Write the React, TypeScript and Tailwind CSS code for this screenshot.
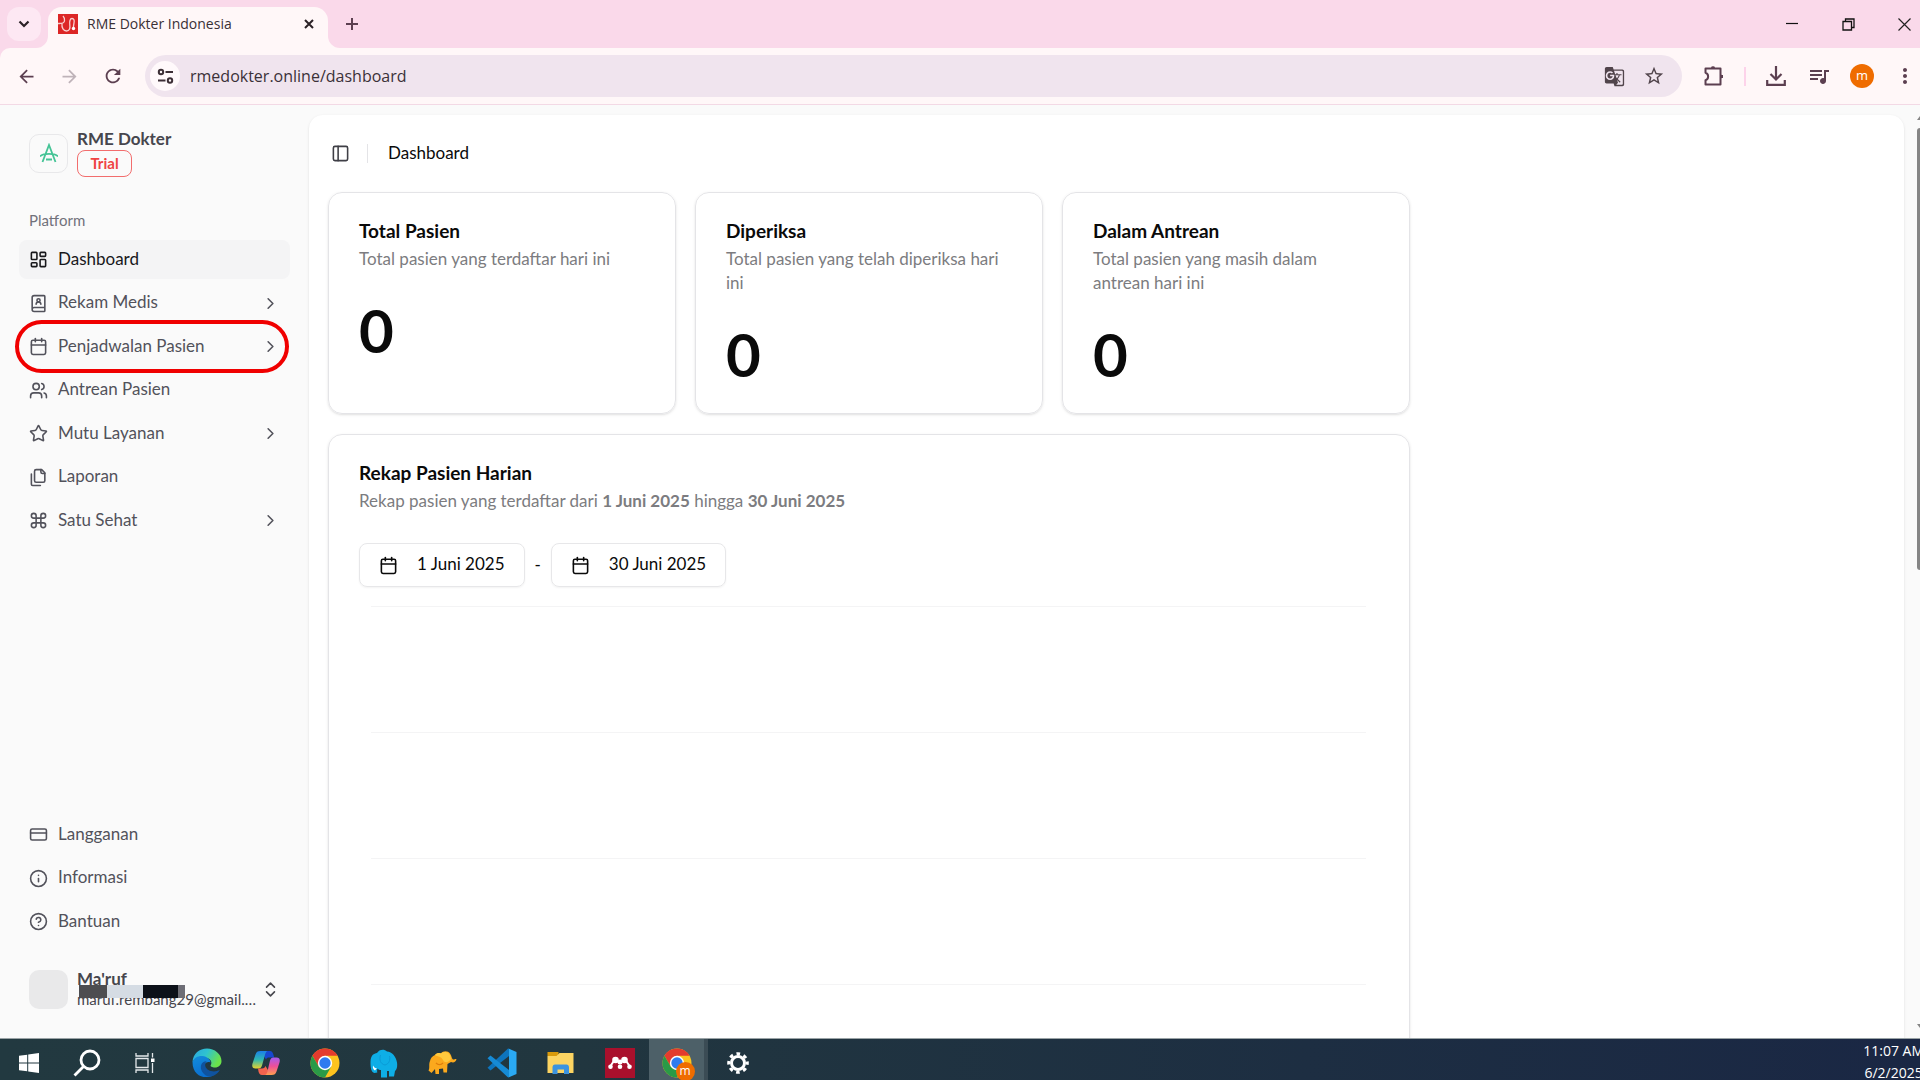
import React from "react";
import {
  BookUser,
  Calendar,
  ChevronRight,
  ChevronsUpDown,
  CircleQuestionMark,
  Command,
  CreditCard,
  Info,
  LayoutDashboard,
  PanelLeft,
  Star,
  Users,
} from "lucide-react";
import {
  MdArrowBack,
  MdArrowForward,
  MdGTranslate,
  MdMoreVert,
  MdQueueMusic,
  MdRefresh,
  MdStarBorder,
} from "react-icons/md";

type IconType = React.ComponentType<{ size?: number }>;
type NavEntry = { label: string; icon: IconType; active?: boolean; expandable?: boolean; marked?: boolean };

function FilesIcon({ size = 24 }: { size?: number }) {
  return (
    <svg width={size} height={size} viewBox="0 0 24 24" fill="none" stroke="currentColor" strokeWidth="2" strokeLinecap="round" strokeLinejoin="round">
      <path d="M20 7h-3a2 2 0 0 1-2-2V2" />
      <path d="M9 18a2 2 0 0 1-2-2V4a2 2 0 0 1 2-2h7l4 4v10a2 2 0 0 1-2 2Z" />
      <path d="M3 7.600v12.800A1.600 1.600 0 0 0 4.600 22h9.800" />
    </svg>
  );
}

const platformNav: NavEntry[] = [
  { label: "Dashboard", icon: LayoutDashboard, active: true },
  { label: "Rekam Medis", icon: BookUser, expandable: true },
  { label: "Penjadwalan Pasien", icon: Calendar, expandable: true, marked: true },
  { label: "Antrean Pasien", icon: Users },
  { label: "Mutu Layanan", icon: Star, expandable: true },
  { label: "Laporan", icon: FilesIcon },
  { label: "Satu Sehat", icon: Command, expandable: true },
];

const supportNav: NavEntry[] = [
  { label: "Langganan", icon: CreditCard },
  { label: "Informasi", icon: Info },
  { label: "Bantuan", icon: CircleQuestionMark },
];

const stats = [
  { title: "Total Pasien", text: "Total pasien yang terdaftar hari ini", value: 0 },
  { title: "Diperiksa", text: "Total pasien yang telah diperiksa hari ini", value: 0 },
  { title: "Dalam Antrean", text: "Total pasien yang masih dalam antrean hari ini", value: 0 },
];

function TabStrip() {
  return (
    <div className="flex h-12 items-end overflow-hidden bg-[#fad9ea]">
      <div className="flex h-12 w-12 items-center pl-[7px]">
        <button aria-label="Cari tab" className="grid size-[34px] place-items-center rounded-xl bg-[#fde8f3]">
          <svg width="12" height="8" viewBox="0 0 12 8" fill="none" stroke="#2b2126" strokeWidth="2.2">
            <path d="M1.5 1.5 6 6l4.5-4.5" />
          </svg>
        </button>
      </div>
      <div className="relative flex h-[41px] w-[280px] items-center rounded-t-[14px] bg-[#fff7f8] px-[10px] pb-[7px]">
        <svg className="absolute bottom-0 -left-3" width="12" height="12" viewBox="0 0 12 12">
          <path d="M12 0v12H0A12 12 0 0 0 12 0Z" fill="#fff7f8" />
        </svg>
        <svg className="absolute -right-3 bottom-0" width="12" height="12" viewBox="0 0 12 12">
          <path d="M0 0v12h12A12 12 0 0 1 0 0Z" fill="#fff7f8" />
        </svg>
        <svg width="20" height="20" viewBox="0 0 20 20" fill="none">
          <path d="M0 0h20v20H0z" fill="#dc2626" />
          <path
            d="M0 9.500c3 0 6 .5 6.500-2.500.3-2-.5-4-1.500-5M4 9.500C3.500 14 5.500 17 8.500 17s3.800-2.500 3.300-6C11.300 7.500 12 4.500 14 4.500s2.500 2 2 4.500-.7 3.500-.5 5"
            stroke="#f9cfcf"
            strokeWidth="1.300"
          />
          <circle cx="15.500" cy="14.500" r="1.700" fill="#fff" />
        </svg>
        <span className="ml-[9px] flex-1 text-sm text-[#3a3035]">RME Dokter Indonesia</span>
        <button aria-label="Tutup tab" className="grid size-[18px] place-items-center">
          <svg width="10" height="10" viewBox="0 0 10 10" stroke="#2b2126" strokeWidth="2">
            <path d="m1 1 8 8M9 1 1 9" />
          </svg>
        </button>
      </div>
      <button aria-label="Tab baru" className="grid size-12 place-items-center">
        <svg width="14" height="14" viewBox="0 0 14 14" stroke="#5c3f50" strokeWidth="2">
          <path d="M7 1v12M1 7h12" />
        </svg>
      </button>
      <div className="-mr-3 ml-auto flex h-12 items-center">
        <button aria-label="Kecilkan" className="grid h-12 w-14 place-items-center">
          <svg width="12" height="12" viewBox="0 0 12 12" stroke="#111" strokeWidth="1.200">
            <path d="M0 5.500h12" />
          </svg>
        </button>
        <button aria-label="Pulihkan" className="grid h-12 w-14 place-items-center">
          <svg width="13" height="13" viewBox="0 0 13 13" fill="none" stroke="#111" strokeWidth="1.300">
            <path d="M1 3.500h8.500V12H1zM3.500 3.500V1H12v8.500H9.500" />
          </svg>
        </button>
        <button aria-label="Tutup" className="grid h-12 w-14 place-items-center">
          <svg width="13" height="13" viewBox="0 0 13 13" stroke="#222" strokeWidth="1.200">
            <path d="m.5.5 12 12M12.500.5l-12 12" />
          </svg>
        </button>
      </div>
    </div>
  );
}

function AddressBar() {
  return (
    <div className="bg-[#fad9ea]">
      <div className="flex h-[57px] items-center rounded-tl-[10px] border-b border-[#f3d9e5] bg-[#fff7f8] text-[#5c3f50]">
        <button aria-label="Kembali" className="ml-[5px] grid h-10 w-[43px] place-items-center">
          <MdArrowBack size={21} />
        </button>
        <button aria-label="Maju" className="grid h-10 w-[43px] place-items-center text-[#bfb3b9]">
          <MdArrowForward size={21} />
        </button>
        <button aria-label="Muat ulang" className="grid h-10 w-[43px] place-items-center">
          <MdRefresh size={22} />
        </button>
        <div className="ml-[11px] flex h-[42px] flex-1 items-center rounded-full bg-[#f0e4ee] pl-[5px]">
          <button aria-label="Info situs" className="grid size-[30px] place-items-center rounded-full bg-[#fff9fb]">
            <svg width="17" height="17" viewBox="0 0 17 17" fill="none" stroke="#3c2f36" strokeWidth="2">
              <circle cx="4" cy="4" r="2.200" />
              <circle cx="13" cy="12.500" r="2.200" />
              <path d="M8.500 4H16M1 12.500h7.500" />
            </svg>
          </button>
          <input
            aria-label="Alamat situs"
            className="ml-[10px] min-w-0 flex-1 bg-transparent text-base text-[#3b3138] outline-none"
            defaultValue="rmedokter.online/dashboard"
          />
          <button aria-label="Terjemahkan" className="grid h-10 w-[39px] place-items-center text-[#51444b]">
            <MdGTranslate size={21} />
          </button>
          <button aria-label="Tandai halaman" className="mr-[9px] grid h-10 w-[39px] place-items-center text-[#51444b]">
            <MdStarBorder size={22} />
          </button>
        </div>
        <button aria-label="Ekstensi" className="ml-[11px] grid h-10 w-[42px] place-items-center">
          <svg width="20" height="20" viewBox="0 0 20 20" fill="none" stroke="currentColor" strokeWidth="2" strokeLinejoin="round">
            <path d="M1.500 2.500h15v16h-15v-4.300c3.500-1 3.500-6.400 0-7.400z" />
            <path d="M7 2.500a2 2 0 0 1 4 0zM16.500 8.500a2 2 0 0 1 0 4z" fill="currentColor" stroke="none" />
            <path d="M7.500 1.500h3M18 9v3" />
          </svg>
        </button>
        <span className="mx-[9px] h-[19px] w-0.5 bg-[#fdd3ea]" />
        <button aria-label="Unduhan" className="grid h-10 w-[42px] place-items-center">
          <svg width="20" height="20" viewBox="0 0 20 20" fill="none" stroke="currentColor" strokeWidth="2.200">
            <path d="M10 0v13M4.500 8l5.500 5.500L15.500 8M1.200 14v4.800h17.600V14" />
          </svg>
        </button>
        <button aria-label="Media" className="grid h-10 w-[44px] place-items-center">
          <MdQueueMusic size={24} />
        </button>
        <button className="mx-[9px] grid size-6 place-items-center rounded-full bg-[#ef6c00] pb-px text-[13px] leading-none text-white">m</button>
        <button aria-label="Menu" className="grid h-10 w-[37px] place-items-center pl-[7px]">
          <MdMoreVert size={24} />
        </button>
      </div>
    </div>
  );
}

function NavItem({ label, icon: Icon, active, expandable, marked }: NavEntry) {
  return (
    <li className="relative">
      <a
        href="#"
        className={
          "flex h-[39px] items-center gap-[10px] rounded-lg px-[10px] " +
          (active ? "bg-[#f4f4f5] text-[#18181b]" : "text-[#52525b]")
        }
      >
        <Icon size={19} />
        <span className="flex-1 pb-0.5">{label}</span>
        {expandable && <ChevronRight size={19} />}
      </a>
      {marked && <span className="pointer-events-none absolute -inset-y-[7px] right-px -left-1 rounded-full border-4 border-[#f00000]" />}
    </li>
  );
}

function Sidebar() {
  return (
    <aside className="flex w-[309px] shrink-0 flex-col px-[19px] pt-6">
      <div className="flex items-center gap-[9px] pl-[10px]">
        <span className="grid size-[39px] place-items-center rounded-[10px] border border-[#e8e8ea]">
          <svg width="18" height="20" viewBox="0 0 18 20" fill="none" stroke="#45c496" strokeWidth="1.800">
            <path d="M2.500 19 9 2l6.500 17M0 13.500c3-3.500 15-3.500 18 0M6 16.500h6" />
          </svg>
        </span>
        <div>
          <div className="text-[17px] leading-5 font-bold text-[#46464d]">RME Dokter</div>
          <span className="mt-px flex h-[27px] w-[55px] items-center justify-center rounded-lg border border-[#f26d6d] text-[15px] font-bold text-[#ef4444]">
            Trial
          </span>
        </div>
      </div>
      <div className="mt-[31px] px-[10px] text-[15px] leading-6 text-[#71717a]">Platform</div>
      <ul className="mt-2 flex h-[300px] flex-col justify-between text-[17px]">
        {platformNav.map((n) => (
          <NavItem key={n.label} {...n} />
        ))}
      </ul>
      <ul className="mt-auto flex h-[126px] flex-col justify-between text-[17px]">
        {supportNav.map((n) => (
          <NavItem key={n.label} {...n} />
        ))}
      </ul>
      <button className="relative mt-[19px] mb-5 flex h-[58px] items-center gap-[9px] px-[10px] text-left text-[#46464d]">
        <span className="size-[39px] shrink-0 rounded-[10px] bg-[#e9e9ea]" />
        <span className="min-w-0 flex-1">
          <span className="block text-[17px] leading-5 font-bold">Ma'ruf</span>
          <span className="-mr-1 block truncate text-[15px] leading-5">maruf.rembang29@gmail.com</span>
        </span>
        <ChevronsUpDown size={19} />
        <span className="absolute top-[25px] left-[60px] flex h-[13px]">
          <span className="w-7 bg-[#4d4d50]" />
          <span className="w-9 bg-[#d5dce4]" />
          <span className="w-[35px] bg-[#0c1119]" />
          <span className="w-[7px] bg-[#6d6d75]" />
        </span>
      </button>
    </aside>
  );
}

function DateButton({ label }: { label: string }) {
  return (
    <button className="flex h-11 items-center gap-[19px] rounded-lg border border-[#e7e7e9] px-[19px] text-[17px] shadow-xs">
      <Calendar size={19} />
      <span className="pb-0.5">{label}</span>
    </button>
  );
}

function Dashboard() {
  return (
    <main className="mt-[10px] min-w-0 flex-1 overflow-hidden rounded-t-[14px] bg-white px-[19px] text-[#0a0a0a] shadow-sm">
      <header className="flex h-[77px] items-center">
        <button aria-label="Buka tutup menu samping" className="px-[3px]">
          <PanelLeft size={19} className="text-[#3f3f46]" />
        </button>
        <span className="ml-[14px] h-[19px] w-px bg-[#e4e4e7]" />
        <h1 className="ml-5 pb-0.5 text-[17px]">Dashboard</h1>
      </header>
      <div className="max-w-[1082px]">
        <div className="grid grid-cols-3 gap-[19px]">
          {stats.map((s) => (
            <section key={s.title} className="rounded-[14px] border border-[#e4e4e7] pt-[26px] pr-10 pb-[29px] pl-[30px] shadow-sm">
              <h2 className="text-[19px] leading-6 font-bold">{s.title}</h2>
              <p className="mt-1 text-[17px] leading-6 text-[#7c7c80]">{s.text}</p>
              <p className="mt-[30px] text-[60px] leading-[59px] font-bold">{s.value}</p>
            </section>
          ))}
        </div>
        <section className="mt-5 h-[800px] rounded-[14px] border border-[#e4e4e7] px-[30px] pt-[26px] shadow-sm">
          <h2 className="text-[19px] leading-6 font-bold">Rekap Pasien Harian</h2>
          <p className="mt-1 text-[17px] leading-6 text-[#7c7c80]">
            Rekap pasien yang terdaftar dari <strong>1 Juni 2025</strong> hingga <strong>30 Juni 2025</strong>
          </p>
          <div className="mt-[30px] flex items-center gap-[10px]">
            <DateButton label="1 Juni 2025" />
            <span className="text-[17px]">-</span>
            <DateButton label="30 Juni 2025" />
          </div>
          <div className="mt-[19px] mr-[13px] ml-3">
            {[0, 1, 2, 3].map((i) => (
              <div key={i} className="h-[126px] border-t border-[#f4f4f5]" />
            ))}
          </div>
        </section>
      </div>
    </main>
  );
}

function ScrollTrack() {
  return (
    <div className="flex w-4 shrink-0 flex-col items-end pt-[11px] pb-[10px]">
      <svg width="3" height="4" viewBox="0 0 3 4" fill="#858585">
        <path d="M3 0v4H0z" />
      </svg>
      <div className="mt-2 h-[442px] w-[3px] rounded-l-full bg-[#858585]" />
      <svg className="mt-auto" width="3" height="4" viewBox="0 0 3 4" fill="#858585">
        <path d="M3 4V0H0z" />
      </svg>
    </div>
  );
}

function ChromeLogo() {
  return (
    <svg width="30" height="30" viewBox="0 0 30 30">
      <circle cx="15" cy="15" r="14.500" fill="#fcc31e" />
      <path d="M2.440 7.750A14.500 14.500 0 0 1 27.560 7.750H15L8.700 18.600Z" fill="#e33b2e" />
      <path d="M2.440 7.750A14.500 14.500 0 0 0 15 29.500L21.300 18.600H8.700Z" fill="#2a9a47" />
      <circle cx="15" cy="15" r="7.200" fill="#fff" />
      <circle cx="15" cy="15" r="5.700" fill="#2f7bf0" />
    </svg>
  );
}

function GearIcon() {
  return (
    <svg width="22" height="22" viewBox="0 0 22 22" fill="none" stroke="#fff">
      <circle cx="11" cy="11" r="6.500" strokeWidth="3" />
      <circle cx="11" cy="11" r="9.300" strokeWidth="3" strokeDasharray="3.650 3.650" strokeDashoffset="1.800" />
    </svg>
  );
}

type Task = { name: string; art: React.ReactNode; active?: boolean };

const systemTasks: Task[] = [
  {
    name: "Start",
    art: (
      <svg width="20" height="20" viewBox="0 0 20 20" fill="#fff">
        <path d="M0 2.800 8.200 1.700v7.800H0zM9.200 1.500 20 0v9.500H9.200zM0 10.500h8.200v7.800L0 17.200zM9.200 10.500H20V20L9.200 18.500z" />
      </svg>
    ),
  },
  {
    name: "Search",
    art: (
      <svg width="28" height="28" viewBox="0 0 28 28" fill="none" stroke="#fff" strokeWidth="2.800">
        <circle cx="17" cy="11" r="9" />
        <path d="M10.500 17.500 1.500 26.500" />
      </svg>
    ),
  },
  {
    name: "Task view",
    art: (
      <svg width="20" height="20" viewBox="0 0 20 20" fill="none" stroke="#e4e8ea" strokeWidth="1.300">
        <path d="M1 5.500h12v9H1zM1 0v3h12V0M1 20v-3h12v3M17.500 0v4.500M17.500 10v10" />
        <path d="M16 5.500h3.500V9H16z" fill="#fff" stroke="none" />
      </svg>
    ),
  },
];

const appTasks: Task[] = [
  {
    name: "Edge",
    art: (
      <svg width="30" height="30" viewBox="0 0 30 30">
        <defs>
          <linearGradient id="edgeTop" x1="0" y1="0" x2="1" y2="0.4">
            <stop offset="0" stopColor="#2aa5e0" />
            <stop offset=".5" stopColor="#2fc3cf" />
            <stop offset="1" stopColor="#6be24a" />
          </linearGradient>
          <linearGradient id="edgeLow" x1="0" y1="0" x2=".4" y2="1">
            <stop offset="0" stopColor="#138ddb" />
            <stop offset="1" stopColor="#0a6fd0" />
          </linearGradient>
        </defs>
        <path d="M.5 14C1 5.500 7.500.5 15 .5S29.500 6 29.500 13c0 4-3 6.500-6.500 6.500-3 0-5-1.200-4.300-2.300 1.600-2.300.8-7.200-5.700-7.200C7 9 2 10 .5 14Z" fill="url(#edgeTop)" />
        <path d="M.5 14C2 9.500 6.500 7.500 10.500 8c4.500.5 8 3.500 8 6.500-4-1.500-6.500 1-6.500 4.500 0 4 4 8.500 9 8.500-8 4-20.500 1-20.500-13.500Z" fill="url(#edgeLow)" />
        <path d="M14.500 13.200c-5.500 0-7 5.800-4.500 10.300 2.500 4.300 7 6.200 11.500 4.200 3-1.200 5-3.200 6.300-5.600-6.800 3-12.800.4-14.300-3.400-.7-2.200-.2-4 1-5.500Z" fill="#0f539f" />
      </svg>
    ),
  },
  {
    name: "Copilot",
    art: (
      <svg width="28" height="26" viewBox="0 0 28 26">
        <defs>
          <linearGradient id="cpLeft" x1="0" y1="0" x2="0" y2="1">
            <stop offset="0" stopColor="#1b7fe8" />
            <stop offset=".5" stopColor="#2fb8b0" />
            <stop offset="1" stopColor="#e8d22c" />
          </linearGradient>
          <linearGradient id="cpRight" x1="0" y1="0" x2="0" y2="1">
            <stop offset="0" stopColor="#a45cf0" />
            <stop offset=".5" stopColor="#ee4f98" />
            <stop offset="1" stopColor="#ffa04e" />
          </linearGradient>
        </defs>
        <path d="M9 1h9c2 0 2.700 1.500 3.200 3l1 3.500H17c-1.500 0-2.500.5-3 2Z" fill="#1747cf" />
        <path d="M8.500 1h6.800c-1.500 1-2 2.500-2.500 4.500L10 15.500c-.7 2-1.500 3-3.500 3H3.500c-3 0-3.800-2-3-5L3.500 4.500C4.300 2 5.500 1 8.500 1Z" fill="url(#cpLeft)" />
        <path d="M19 25H10c-2 0-3-1.500-3.400-3L6 18.500h4c1.800 0 2.800-.8 3.500-2.500Z" fill="#f2634e" />
        <path d="M19.500 25h-6.300c1.500-1 2-2.500 2.500-4.500L18 10.500c.7-2 1.500-3 3.500-3h3c3 0 3.800 2 3 5l-3 9c-.8 2.500-2 3.500-5 3.500Z" fill="url(#cpRight)" />
      </svg>
    ),
  },
  { name: "Chrome", art: <ChromeLogo /> },
  {
    name: "Database",
    art: (
      <svg width="29" height="29" viewBox="0 0 29 29">
        <path d="M1.500 13C1.500 6 5 4.500 8 4c2-3.500 7-4.500 10-1.500 5 0 9 5 10 11 .5 3.500 0 7-2 8.500L25 27.500h-5V22h-2v6.500h-6V21c-1.500 0-2.500-.5-3.500-1.500-.5 1.500-.5 3-.2 4l-2.800.5C2 23.500 1.500 18 1.500 13Z" fill="#0eaee6" />
        <path d="M11.500 6c-1.500 5 0 9 4.500 10 4-1 5.500-5 4.500-9" fill="none" stroke="#0a9ad6" strokeWidth="1" />
        <path d="M4 16.500c1 2 2.500 3 4 2.500l-2 2.500c-1.500-.5-2.500-2.500-2-5Z" fill="#fff" />
      </svg>
    ),
  },
  {
    name: "Web server",
    art: (
      <svg width="29" height="24" viewBox="0 0 29 24">
        <path d="M7 4C9 1.500 12 2 13 2.500c2-3 7-3 9 0 2 3 1.500 5 3 6 1.500.3 2-1 3.500-.5-.5 3-3 4-5.500 3l-3.500 2-.5 8.500h-3.500l-.5-4-4 .5V23H7.500L7 18l-3.500 4L.5 19.500C2 17 .5 13 2 10c.5-3 2.500-5 5-6Z" fill="#fba91d" />
        <path d="M7 4c3 2 6 1 8 5s6 2 8-1C23 4 20 .5 17 1c-2 0-3 .5-4 1.500C11 1.500 9 2 7 4Z" fill="#ffc83d" />
        <path d="M8 12c2 2 5 2 7 0" fill="none" stroke="#e07e0c" strokeWidth="1.300" />
      </svg>
    ),
  },
  {
    name: "Visual Studio Code",
    art: (
      <svg width="30" height="30" viewBox="0 0 30 30">
        <path d="M22 .8 29.500 4v22L22 29.200Z" fill="#2aa9f3" />
        <path d="M22 8 3.500 22.500.5 19.800 20.500 1c.6-.5 1-.6 1.500-.2Z" fill="#0d74bd" />
        <path d="M22 22 3.500 7.500.5 10.200 20.500 29c.6.500 1 .6 1.500.2Z" fill="#168bd6" />
      </svg>
    ),
  },
  {
    name: "File Explorer",
    art: (
      <svg width="27" height="23" viewBox="0 0 27 23">
        <path d="M.5 0h11v4H.5z" fill="#d99a0b" />
        <path d="M.5 4h9l3-3h14v20H.5z" fill="#fcd462" />
        <path d="M5.500 22v-6.500c0-2 1-3 2.500-3h11.500c1.500 0 2.500 1 2.500 3V22h-5v-4.500h-6.500V22Z" fill="#3b93df" />
      </svg>
    ),
  },
  {
    name: "Mendeley",
    art: (
      <svg width="30" height="30" viewBox="0 0 30 30">
        <path d="M0 0h30v30H0z" fill="#a9102c" />
        <g fill="#fff">
          <circle cx="10.500" cy="12" r="3.300" />
          <circle cx="19.500" cy="12" r="3.300" />
          <circle cx="5.500" cy="18.800" r="2.300" />
          <circle cx="15" cy="18.800" r="2.300" />
          <circle cx="24.500" cy="18.800" r="2.300" />
          <circle cx="15" cy="14" r="2.500" />
        </g>
        <path d="M5.500 18 9.500 12M24.500 18l-4-6" stroke="#fff" strokeWidth="2" />
      </svg>
    ),
  },
  {
    name: "Chrome profile",
    active: true,
    art: (
      <span className="relative">
        <ChromeLogo />
        <span className="absolute -right-[3px] -bottom-[3px] grid size-[19px] place-items-center rounded-full bg-[#ef6c00] pb-px text-[12px] leading-none text-white">m</span>
      </span>
    ),
  },
  { name: "Settings", art: <GearIcon /> },
];

function Taskbar() {
  return (
    <footer className="flex h-[42px] shrink-0 items-start overflow-hidden border-t border-[#9aa3a6] bg-linear-to-r from-[#223940] via-[#21363f] via-30% to-[#1a2744] text-white">
      <div className="mr-[3px] flex">
        {systemTasks.map((t) => (
          <button key={t.name} aria-label={t.name} className="grid h-12 w-[58px] place-items-center">
            {t.art}
          </button>
        ))}
      </div>
      {appTasks.map((t) => (
        <button
          key={t.name}
          aria-label={t.name}
          className={
            "grid h-12 w-[59px] shrink-0 place-items-center " +
            (t.active ? "border-r-4 border-[#3b4c55] bg-[#4d6068]" : "")
          }
        >
          {t.art}
        </button>
      ))}
      <div className="-mr-1 ml-auto pt-px text-center text-[14px] leading-[22px] whitespace-nowrap">
        <div>11:07 AM</div>
        <div>6/2/2025</div>
      </div>
    </footer>
  );
}

export default function App() {
  return (
    <div className="flex h-screen flex-col overflow-hidden bg-[#fafafa] font-['Open_Sans',sans-serif]">
      <TabStrip />
      <AddressBar />
      <div className="flex min-h-0 flex-1 font-['Lato',sans-serif]">
        <Sidebar />
        <Dashboard />
        <ScrollTrack />
      </div>
      <Taskbar />
    </div>
  );
}
